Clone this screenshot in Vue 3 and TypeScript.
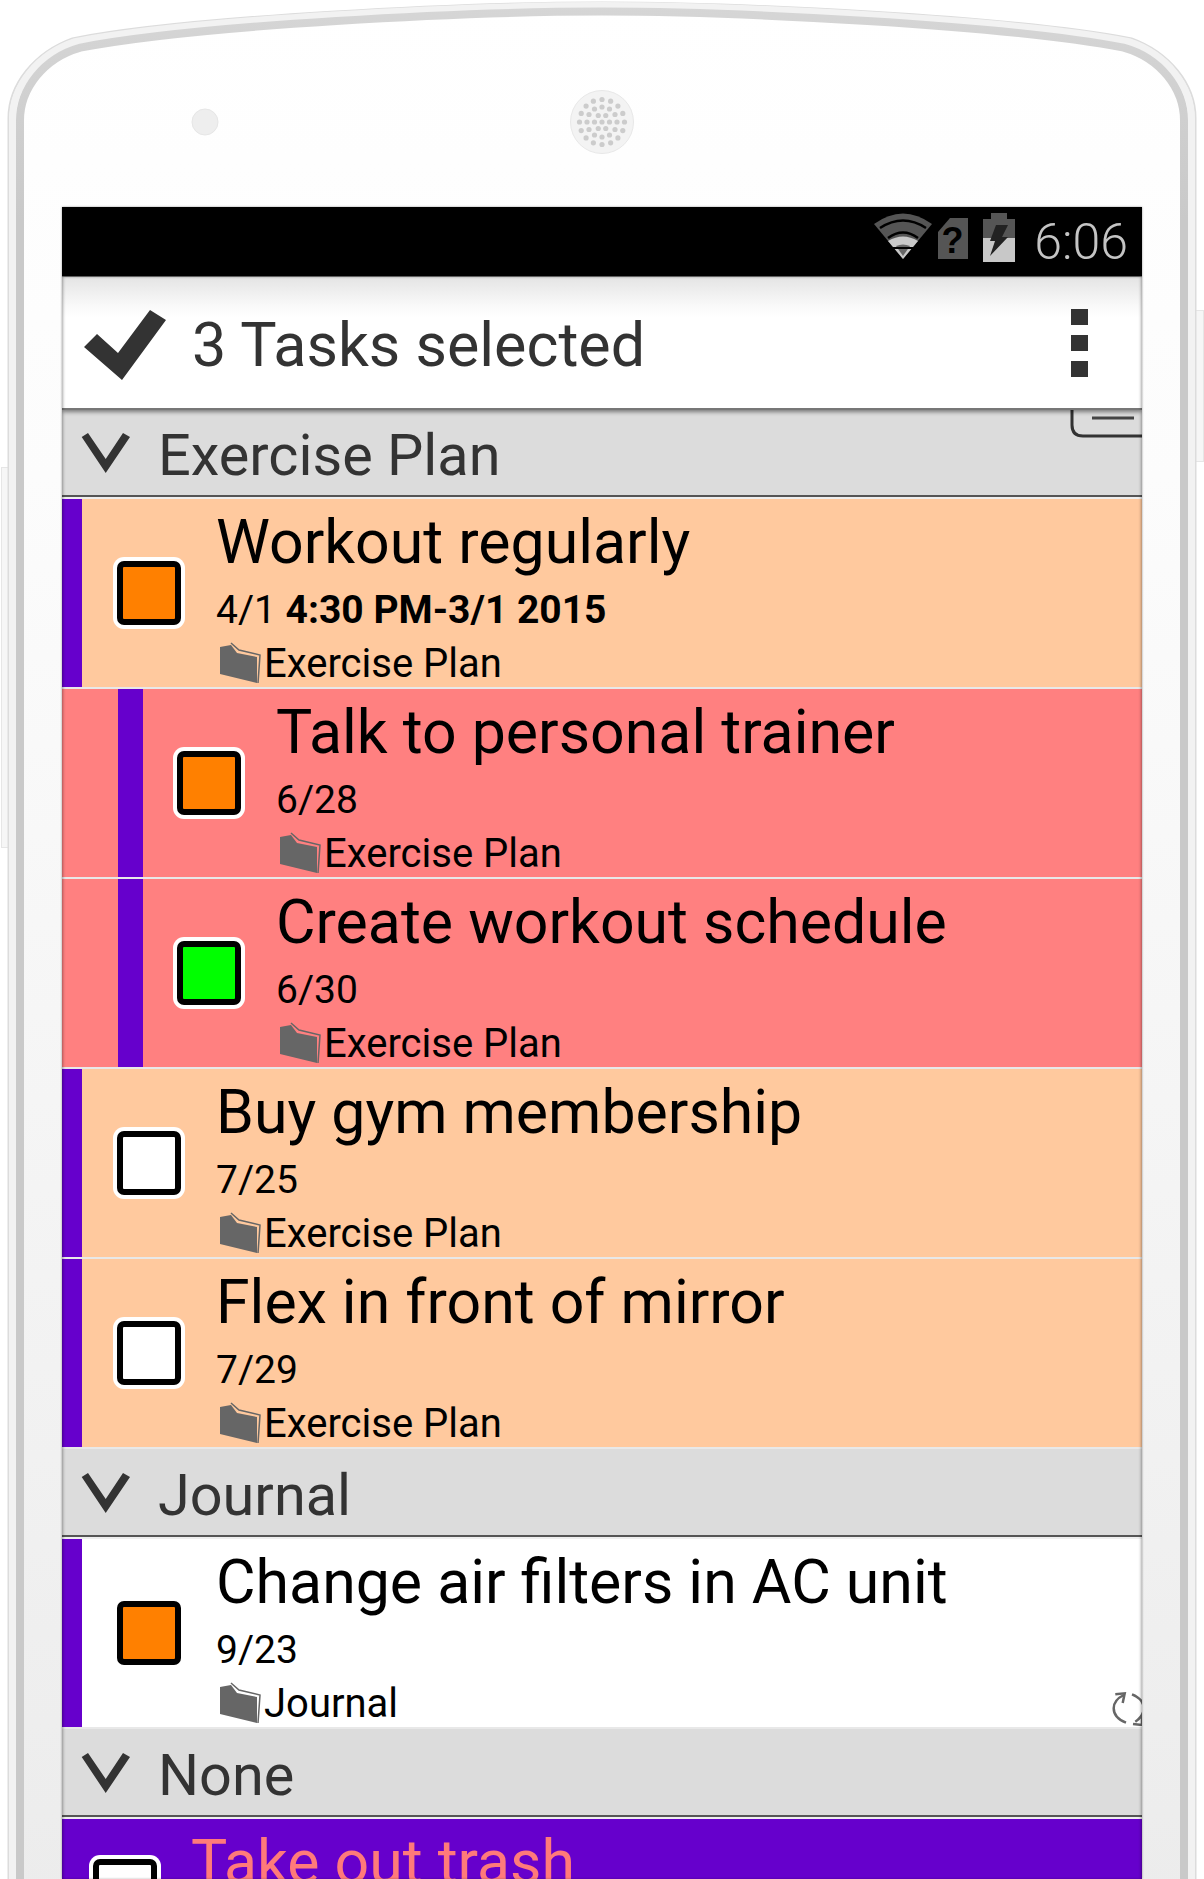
<script setup lang="ts">
interface Task {
  title: string
  date: string
  bold?: string
  folder: string
  box: string
  bg: string
  sub?: boolean
}
interface Group {
  name: string
  tasks: Task[]
}

const groups: Group[] = [
  {
    name: 'Exercise Plan',
    tasks: [
      { title: 'Workout regularly', date: '4/1 ', bold: '4:30 PM-3/1 2015', folder: 'Exercise Plan', box: 'orange', bg: 'peach' },
      { title: 'Talk to personal trainer', date: '6/28', folder: 'Exercise Plan', box: 'orange', bg: 'pink', sub: true },
      { title: 'Create workout schedule', date: '6/30', folder: 'Exercise Plan', box: 'green', bg: 'pink', sub: true },
      { title: 'Buy gym membership', date: '7/25', folder: 'Exercise Plan', box: 'white', bg: 'peach' },
      { title: 'Flex in front of mirror', date: '7/29', folder: 'Exercise Plan', box: 'white', bg: 'peach' }
    ]
  },
  {
    name: 'Journal',
    tasks: [{ title: 'Change air filters in AC unit', date: '9/23', folder: 'Journal', box: 'orange', bg: 'plain' }]
  }
]

function framePath(i: number): string {
  const l = 8 + i
  const r = 1196 - i
  const t = 2 + i * 0.8
  const c = 38 + i * 0.8
  return `M${l} 1900 V${118 + i * 0.2} C${l} ${84 + i * 0.4} ${l + 26 - i * 0.2} ${52 + i * 0.5} ${l + 64 - i * 0.3} ${c} C${l + 180} ${15 + i * 0.8} 470 ${t} 602 ${t} C734 ${t} ${r - 180} ${15 + i * 0.8} ${r - 64 + i * 0.3} ${c} C${r - 26 + i * 0.2} ${52 + i * 0.5} ${r} ${84 + i * 0.4} ${r} ${118 + i * 0.2} V1900`
}

const speakerDots: { x: number; y: number }[] = [{ x: 602, y: 122 }]
const rings = [
  { r: 7.5, n: 6 },
  { r: 15, n: 12 },
  { r: 22.5, n: 16 }
]
for (const ring of rings) {
  for (let k = 0; k < ring.n; k++) {
    const a = (k / ring.n) * Math.PI * 2
    speakerDots.push({ x: 602 + ring.r * Math.cos(a), y: 122 + ring.r * Math.sin(a) })
  }
}
</script>

<template>
  <div class="device">
    <div class="btn btn-left"></div>
    <div class="btn btn-right"></div>

    <svg class="frame" width="1204" height="1879" viewBox="0 0 1204 1879">
      <defs>
        <linearGradient id="bodyFill" x1="0" y1="0" x2="0" y2="1">
          <stop offset="0" stop-color="#ffffff" />
          <stop offset="0.25" stop-color="#fcfcfc" />
          <stop offset="1" stop-color="#ececec" />
        </linearGradient>
        <linearGradient id="bandFill" gradientUnits="userSpaceOnUse" x1="0" y1="0" x2="0" y2="220">
          <stop offset="0" stop-color="#d6d6d6" />
          <stop offset="0.3" stop-color="#d2d2d2" />
          <stop offset="1" stop-color="#c9c9c9" />
        </linearGradient>
      </defs>
      <path :d="framePath(0) + ' Z'" fill="url(#bodyFill)" stroke="none" />
      <path :d="framePath(0.5)" fill="none" stroke="#dcdcdc" stroke-width="2" />
      <path :d="framePath(4.5)" fill="none" stroke="#f2f2f2" stroke-width="7" />
      <path :d="framePath(12)" fill="none" stroke="url(#bandFill)" stroke-width="8" />
      <circle cx="205" cy="122" r="13" fill="#eeeeee" stroke="#e6e6e6" />
      <circle cx="602" cy="122" r="31.5" fill="#f3f3f3" stroke="#e8e8e8" />
      <circle v-for="(d, i) in speakerDots" :key="i" :cx="d.x" :cy="d.y" r="2.6" fill="#cccccc" />
    </svg>

    <div class="screen">
      <div class="status">
        <svg class="wifi" width="66" height="54" viewBox="0 0 66 54">
          <path d="M34 49 L5 14 Q34 -7 63 14 Z" fill="#555" />
          <path d="M11 18 Q34 3 57 18" fill="none" stroke="#000" stroke-width="2.5" />
          <path d="M19 28 Q34 17 49 28" fill="none" stroke="#000" stroke-width="2.5" />
          <path d="M34 49 L19 31 Q34 22 49 31 Z" fill="#c8c8c8" />
          <path d="M34 46 L27 36 Q34 33 41 36 Z" fill="#666" />
          <path d="M21 38 L47 38" stroke="#000" stroke-width="2" />
        </svg>
        <svg class="sim" width="32" height="44" viewBox="0 0 32 44">
          <path d="M1 16 L13 2 H31 V43 H1 Z" fill="#555" />
          <text x="15.5" y="37" text-anchor="middle" class="sim-q">?</text>
        </svg>
        <svg class="battery" width="34" height="50" viewBox="0 0 34 50">
          <path d="M9 0 H25 V6 H33 V25 H1 V6 H9 Z" fill="#555" />
          <rect x="1" y="25" width="32" height="24" fill="#c8c8c8" />
          <path d="M14 12 H26 L20 24 H26 L8 43 L13 28 H8 Z" fill="#222" />
        </svg>
        <span class="time">6:06</span>
      </div>

      <div class="actionbar">
        <svg class="check-icon" width="90" height="80" viewBox="0 0 90 80">
          <polygon points="4,42 17,29 38,48 70,5 86,15 42,75" fill="#333" />
        </svg>
        <span class="bar-title">3 Tasks selected</span>
        <div class="menu">
          <i></i><i></i><i></i>
        </div>
      </div>

      <div v-for="(g, gi) in groups" :key="g.name">
        <div class="group">
          <svg class="chevron" width="50" height="42" viewBox="0 0 50 42">
            <polygon points="0.7,5 7,1 24.7,27 42,1 49,5 24.7,41" fill="#333" />
          </svg>
          <span class="group-name">{{ g.name }}</span>
          <svg v-if="gi === 0" class="card-icon" width="72" height="30" viewBox="0 0 72 30">
            <path d="M2 -6 V16 Q2 27 13 27 H72" fill="none" stroke="#333" stroke-width="3" />
            <path d="M22 9 H64" stroke="#444" stroke-width="3" />
          </svg>
        </div>
        <div v-for="t in g.tasks" :key="t.title" class="row" :class="[t.bg, { sub: t.sub }]">
          <div class="stripe"></div>
          <div class="box" :class="t.box"></div>
          <div class="text">
            <div class="title">{{ t.title }}</div>
            <div class="date">{{ t.date }}<b v-if="t.bold">{{ t.bold }}</b></div>
            <div class="folder">
              <svg class="folder-icon" width="44" height="42" viewBox="0 0 44 42">
                <polyline points="12,1 20,8 41,13 39,41" fill="none" stroke="#666" stroke-width="1.5" />
                <polygon points="1,5 12,3 18,11 38,15 38,41 1,32" fill="#666" />
              </svg>
              <span>{{ t.folder }}</span>
            </div>
          </div>
          <svg v-if="g.name === 'Journal'" class="sync" width="32" height="36" viewBox="0 0 32 36">
            <path d="M11.7 5 Q1.7 10 1.7 18.3 Q1.7 28 14 32.7" fill="none" stroke="#666" stroke-width="2.5" />
            <path d="M20 4.3 Q31.7 9 31.7 18.3 Q31.7 26 23.3 31.7" fill="none" stroke="#666" stroke-width="2.5" />
            <polyline points="3.3,4.3 12.7,3.3 10.7,13" fill="none" stroke="#666" stroke-width="2.5" />
            <polyline points="30,25 30,35 21,34" fill="none" stroke="#666" stroke-width="2.5" />
          </svg>
        </div>
      </div>

      <div class="group">
        <svg class="chevron" width="50" height="42" viewBox="0 0 50 42">
          <polygon points="0.7,5 7,1 24.7,27 42,1 49,5 24.7,41" fill="#333" />
        </svg>
        <span class="group-name">None</span>
      </div>
      <div class="row violet">
        <div class="box white"></div>
        <div class="text">
          <div class="title">Take out trash</div>
        </div>
      </div>
      <div class="edge"></div>
    </div>
  </div>
</template>

<style>
html,
body {
  margin: 0;
  overflow: hidden;
  background: #ffffff;
}
</style>

<style scoped>
.device {
  position: relative;
  width: 1204px;
  height: 1879px;
  overflow: hidden;
  padding: 207px 62px 0;
  box-sizing: border-box;
  font-family: Roboto, "Liberation Sans", sans-serif;
}
.frame {
  position: absolute;
  left: 0;
  top: 0;
}
.btn {
  position: absolute;
  background: #f6f6f6;
  border: 1px solid #e6e6e6;
  box-sizing: border-box;
}
.btn-left {
  left: 1px;
  top: 467px;
  width: 8px;
  height: 381px;
  border-right: 0;
}
.btn-right {
  left: 1195px;
  top: 310px;
  width: 9px;
  height: 152px;
  border-left: 0;
}
.screen {
  position: relative;
  width: 1080px;
  height: 1672px;
  overflow: hidden;
  background: #fff;
  box-shadow: 0 0 2px rgba(0, 0, 0, 0.4);
}
.edge {
  position: absolute;
  inset: 70px 0 0;
  box-shadow: inset 2px 0 3px -1px rgba(0, 0, 0, 0.35), inset -2px 0 3px -1px rgba(0, 0, 0, 0.35);
  z-index: 5;
}
.status {
  height: 69px;
  border-bottom: 1px solid #666;
  background: #000;
  position: relative;
  display: flex;
  align-items: center;
  justify-content: flex-end;
}
.wifi {
  margin-right: 2px;
  margin-top: -9px;
}
.sim {
  margin-right: 13px;
  margin-top: -7px;
}
.battery {
  margin-right: 18px;
  margin-top: -7px;
}
.sim-q {
  font: bold 36px "Liberation Sans", sans-serif;
  fill: #000;
}
.time {
  font-weight: 300;
  font-size: 50px;
  line-height: 50px;
  color: #c4c4c4;
  margin-right: 14px;
}
.actionbar {
  position: relative;
  z-index: 3;
  height: 133px;
  margin-bottom: -1px;
  box-sizing: border-box;
  display: flex;
  align-items: center;
  background: linear-gradient(#e4e4e4 0, #fafafa 30px, #ffffff 40px);
  border-bottom: 2px solid #777;
  box-shadow: 0 2px 4px rgba(0, 0, 0, 0.45);
}
.check-icon {
  margin-left: 18px;
  margin-top: 4px;
  flex: none;
}
.bar-title {
  font-size: 61px;
  color: #333;
  margin-left: 22px;
  flex: 1;
  padding-top: 4px;
}
.menu {
  display: flex;
  flex-direction: column;
  gap: 10px;
  margin-right: 54px;
  margin-top: 1px;
}
.menu i {
  display: block;
  width: 17px;
  height: 16px;
  background: #333;
}
.group {
  position: relative;
  height: 90px;
  box-sizing: border-box;
  padding-top: 3px;
  background: #dcdcdc;
  background-clip: padding-box;
  display: flex;
  align-items: center;
  overflow: hidden;
  box-shadow: inset 0 -2px 0 #555;
  border-bottom: 2px solid #eee;
}
.chevron {
  margin-left: 19px;
  flex: none;
  margin-top: -3px;
}
.group-name {
  font-size: 57.6px;
  color: #333;
  margin-left: 27px;
  padding-top: 2px;
}
.card-icon {
  position: absolute;
  right: 0;
  top: 0;
}
.row {
  position: relative;
  display: flex;
  align-items: center;
  height: 190px;
  box-sizing: border-box;
  border-bottom: 2px solid #e8e8e8;
  color: #000;
}
.peach {
  background: #ffc99e;
}
.pink {
  background: #ff8080;
}
.plain {
  background: #fff;
}
.sub {
  padding-left: 56px;
}
.violet {
  background: #6600cc;
  height: 144px;
  border-bottom: 0;
}
.stripe {
  align-self: stretch;
  width: 20px;
  background: #6600cc;
  flex: none;
}
.sub .stripe {
  width: 25px;
}
.box {
  width: 64px;
  height: 64px;
  box-sizing: border-box;
  margin: 0 35px 0 35px;
  flex: none;
  border: 6px solid #000;
  border-radius: 7px;
  box-shadow: 0 0 0 4px #fff;
}
.sub .box {
  margin: 0 35px 0 34px;
}
.violet .box {
  margin: 0 34px 0 31px;
}
.orange {
  background: #ff8000;
}
.green {
  background: #00ff00;
}
.white {
  background: #fff;
}
.text {
  flex: 1;
  align-self: flex-start;
  padding-top: 6px;
}
.title {
  font-size: 60.8px;
  line-height: 76px;
  margin-bottom: 4px;
  white-space: nowrap;
}
.violet .title {
  color: #ff7a7a;
}
.date {
  font-size: 39px;
  line-height: 50px;
  white-space: pre;
}
.folder {
  display: flex;
  align-items: center;
  height: 44px;
  margin-top: 6px;
  font-size: 40px;
  white-space: nowrap;
}
.folder-icon {
  margin-left: 3px;
  margin-right: 1px;
  flex: none;
}
.sync {
  position: absolute;
  right: -2px;
  top: 151px;
}
</style>
